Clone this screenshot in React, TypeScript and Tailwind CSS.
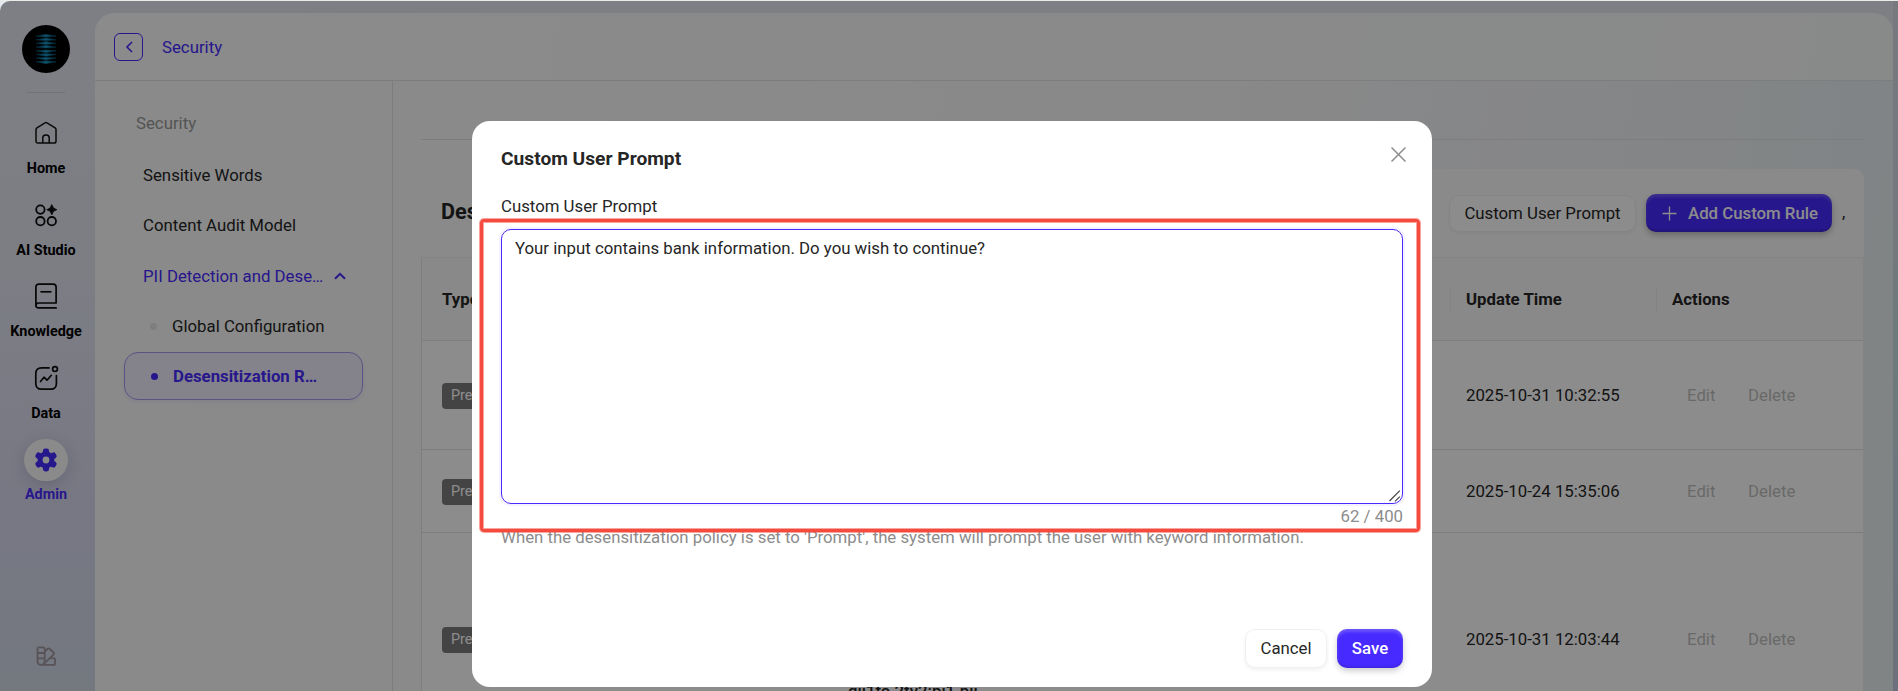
import React from "react";

const navItem = "flex flex-col items-center text-[14.4px] leading-[20px] font-bold text-black";

function HomeIcon() {
  return (
    <svg className="size-6" viewBox="0 0 24 24" fill="none" stroke="#111" strokeWidth="1.5" strokeLinejoin="round">
      <path d="M2 8.6 C2 7.8 2.3 7.4 2.9 6.9 L11 1.8 C11.6 1.4 12.4 1.4 13 1.8 L21.1 6.9 C21.7 7.4 22 7.8 22 8.6 V20.2 C22 21.3 21.3 22 20.2 22 H3.8 C2.7 22 2 21.3 2 20.2 Z" />
      <path d="M8.8 22 V16.8 C8.8 13.2 15.2 13.2 15.2 16.8 V22" />
    </svg>
  );
}

function StudioIcon() {
  return (
    <svg className="size-6" viewBox="0 0 24 24" fill="none" stroke="#0b0b0b" strokeWidth="1.8">
      <circle cx="6.4" cy="6.6" r="4.2" />
      <circle cx="6.4" cy="18.2" r="4.2" />
      <circle cx="17.8" cy="18.2" r="4.2" />
      <path d="M17.8 1.6 L19.5 5.1 L22.8 6.7 L19.5 8.3 L17.8 11.8 L16.1 8.3 L12.8 6.7 L16.1 5.1 Z" fill="#0b0b0b" strokeWidth="0.8" strokeLinejoin="round" />
    </svg>
  );
}

function BookIcon() {
  return (
    <svg className="h-[26px] w-6" viewBox="0 0 24 26" fill="none" stroke="#0b0b0b" strokeWidth="1.7" strokeLinejoin="round">
      <path d="M22.8 24.9 H4.6 C2.6 24.9 1.9 23.8 1.9 22.4 V4.3 C1.9 2.2 2.9 1.1 5 1.1 H19.2 C21.3 1.1 22.1 2.2 22.1 4.3 V20 H4.6 C2.8 20 1.9 21 1.9 22.4" />
      <path d="M6.4 8.8 H17.5" />
    </svg>
  );
}

function DataIcon() {
  return (
    <svg className="size-[26px]" viewBox="0 0 26 26" fill="none" stroke="#0b0b0b" strokeWidth="1.7" strokeLinecap="round" strokeLinejoin="round">
      <path d="M16 2.9 H8.6 C4.6 2.9 2.8 4.7 2.8 8.7 V18.4 C2.8 22.4 4.6 24.1 8.6 24.1 H17.8 C21.8 24.1 23.4 22.4 23.4 18.4 V10.5" />
      <path d="M7.5 16.5 L11 12.2 L14 15.2 L18.3 10.3" />
      <circle cx="22" cy="4" r="2.4" />
    </svg>
  );
}

function GearIcon() {
  const teeth = [0, 60, 120, 180, 240, 300];
  return (
    <svg className="size-6" viewBox="0 0 24 24" fill="#472aff">
      <path fillRule="evenodd" d="M12 3.6 A8.4 8.4 0 1 0 12 20.4 A8.4 8.4 0 1 0 12 3.6 Z M12 8.6 A3.4 3.4 0 1 1 12 15.4 A3.4 3.4 0 1 1 12 8.6 Z" />
      {teeth.map((a) => (
        <rect key={a} x="8.9" y="0.5" width="6.2" height="6" rx="2.4" transform={`rotate(${a} 12 12)`} />
      ))}
    </svg>
  );
}

function SwatchIcon() {
  return (
    <svg className="size-5" viewBox="0 0 20 20" fill="none" stroke="#a0979f" strokeWidth="1.8" strokeLinejoin="round">
      <path d="M1.5 3 C1.5 1.8 2 1.3 3.2 1.3 H7 C8.2 1.3 8.7 1.8 8.7 3 V15 C8.7 17.6 7.4 18.9 5.1 18.9 C2.8 18.9 1.5 17.6 1.5 15 Z" />
      <path d="M1.5 7 H8.7 M1.5 12.4 H8.7" />
      <path d="M8.7 5.6 L11.4 3 C12.2 2.2 13 2.2 13.8 3 L17.4 6.4 C18.2 7.2 18.2 7.8 17.4 8.6 L7.6 18.2" />
      <path d="M14 12.2 H17.4 C18.6 12.2 19.1 12.7 19.1 13.9 V17.2 C19.1 18.4 18.6 18.9 17.4 18.9 H5.1" />
    </svg>
  );
}

function Logo() {
  const bars = [0, 1, 2, 3, 4, 5, 6, 7];
  return (
    <svg className="size-12" viewBox="0 0 48 48">
      <defs>
        <linearGradient id="bar" x1="0" x2="1">
          <stop offset="0" stopColor="#0a4a6c" />
          <stop offset="0.5" stopColor="#1c9cc4" />
          <stop offset="1" stopColor="#0a4a6c" />
        </linearGradient>
      </defs>
      <circle cx="24" cy="24" r="24" fill="#000" />
      {bars.map((i) => {
        const y = 11.2 + i * 3.65;
        const up = i < 4 ? 1.9 : 0.9;
        const down = i < 4 ? 0.9 : 1.9;
        return <path key={i} d={`M14 ${y} L24 ${y - up} L34 ${y} L24 ${y + down} Z`} fill="url(#bar)" stroke="#0b5f85" strokeWidth="0.5" />;
      })}
    </svg>
  );
}

function Sidebar() {
  return (
    <nav className="flex w-[95px] shrink-0 flex-col items-center pr-[3px] pt-[25px]">
      <Logo />
      <div className="mt-[19px] h-px w-[38px] bg-[#cfd0da]" />
      <div className={`${navItem} mt-[28px]`}><HomeIcon /><span className="mt-[14px]">Home</span></div>
      <div className={`${navItem} mt-[24px]`}><StudioIcon /><span className="mt-[14px]">AI Studio</span></div>
      <div className={`${navItem} mt-[22px]`}><BookIcon /><span className="mt-[13px]">Knowledge</span></div>
      <div className={`${navItem} mt-[23px]`}><DataIcon /><span className="mt-[13px]">Data</span></div>
      <div className={`${navItem} mt-[15px]`}>
        <div className="flex h-[42px] w-11 items-center justify-center rounded-full bg-[#fbfbfb] shadow-[0_4px_16px_rgba(60,60,110,0.2)]"><GearIcon /></div>
        <span className="mt-[4px] text-[#472aff]">Admin</span>
      </div>
      <div className="mt-auto mb-[25px] pr-px"><SwatchIcon /></div>
    </nav>
  );
}

function Submenu() {
  return (
    <aside className="flex w-[298px] shrink-0 flex-col border-r border-[#e3e3e6] text-[16.8px] text-[#262626]">
      <div className="mt-[30px] pl-[41px] leading-[24px] text-[#9a9a9a]">Security</div>
      <div className="mt-[28px] pl-[48px] leading-[24px]">Sensitive Words</div>
      <div className="mt-[26px] pl-[48px] leading-[24px]">Content Audit Model</div>
      <div className="mt-[27px] flex items-center pl-[48px] leading-[24px] text-[#472aff]">
        PII Detection and Dese…
        <svg className="ml-[11px] h-2 w-3" viewBox="0 0 12 8" fill="none" stroke="#472aff" strokeWidth="2"><path d="M1 6.8 L6 1.8 L11 6.8" /></svg>
      </div>
      <div className="mt-[26px] flex items-center pl-[55px] leading-[24px]">
        <span className="mr-[15px] size-[7px] rounded-full bg-[#e6e6e9]" />Global Configuration
      </div>
      <div className="mt-[14px] ml-[29px] flex h-12 w-[239px] items-center rounded-[14px] border border-[#a698ef] bg-[#f1eefd] pl-[26px] font-bold leading-[24px] text-[#472aff] shadow-[0_2px_4px_rgba(70,40,255,0.08)]">
        <span className="mr-[15px] size-[7px] rounded-full bg-[#472aff]" />Desensitization R…
      </div>
    </aside>
  );
}

const rows = [
  { time: "2025-10-31 10:32:55", cls: "h-[109px] pt-[2px]", note: "" },
  { time: "2025-10-24 15:35:06", cls: "h-[83px] pt-[2px]", note: "" },
  { time: "2025-10-31 12:03:44", cls: "h-[214px]", note: "qjj1to 2tv2:pj1.pjj" },
];

function Content() {
  return (
    <section className="flex min-w-0 flex-1 flex-col pl-[28px] pr-[29px] text-[16.8px] text-[#262626]">
      <div className="h-[59px] shrink-0 border-b border-[#e3e3e6]" />
      <div className="mt-[29px] flex h-[89px] shrink-0 items-center rounded-t-[10px] border-b border-[#eeeeee] bg-[#fafcfa] pl-[20px] pr-[18px]">
        <h1 className="-mt-[2px] text-[21.6px] font-bold text-[#262626]">Desensitization Rules</h1>
        <button className="ml-auto h-[37px] w-[187px] rounded-[10px] border border-[#f0f0f0] bg-white pt-px shadow-[0_2px_4px_rgba(0,0,0,0.04)]">Custom User Prompt</button>
        <button className="ml-[10px] flex h-[38px] w-[186px] items-center rounded-[10px] bg-[#472aff] pl-[16px] pt-px font-medium text-white shadow-[inset_0_3px_3px_rgba(255,255,255,0.2),inset_0_-2px_2px_rgba(0,0,0,0.15),0_3px_6px_rgba(0,0,0,0.25)]">
          <svg className="mr-[11px] size-[15px] shrink-0" viewBox="0 0 15 15" stroke="#fff" strokeWidth="1.3"><path d="M7.5 0.5 V14.5 M0.5 7.5 H14.5" /></svg>
          <span className="whitespace-nowrap">Add Custom Rule</span>
        </button>
        <span className="ml-[10px] w-1">,</span>
      </div>
      <div className="mr-px flex h-[83px] shrink-0 items-center border-b border-l border-[#e6e6e6] bg-[#fafafa] pl-[20px] pt-px font-bold">
        <span className="w-[1008px]">Type</span>
        <div className="flex h-[26px] w-[206px] items-center border-l border-[#efefef] pl-[15px]">Update Time</div>
        <div className="flex h-[26px] items-center border-l border-[#efefef] pl-[15px]">Actions</div>
      </div>
      {rows.map((r) => (
        <div key={r.time} className={`${r.cls} relative mr-px flex shrink-0 items-center border-b border-l border-[#e3e3e3] bg-white pl-[20px]`}>
          <span className="flex h-[26px] w-[70px] items-center rounded-[4px] bg-[#7d7d7d] pl-[9px] text-[14.4px] text-white">Preset</span>
          <span className="ml-[954px] w-[221px]">{r.time}</span>
          <span className="w-[61px] text-[#bfbfbf]">Edit</span>
          <span className="text-[#bfbfbf]">Delete</span>
          {r.note && <span className="absolute left-[426px] top-[148px] font-medium leading-[20px]">{r.note}</span>}
        </div>
      ))}
    </section>
  );
}

function Modal() {
  return (
    <div className="relative flex h-[566px] w-[960px] flex-col rounded-[18px] bg-white pl-[29px] pr-[29px] text-[16.8px] text-[#262626]">
      <svg className="absolute right-[26px] top-[26px] size-[15px]" viewBox="0 0 15 15" stroke="#8c8c8c" strokeWidth="1.5"><path d="M0.5 0.5 L14.5 14.5 M14.5 0.5 L0.5 14.5" /></svg>
      <h2 className="mt-[25px] text-[19.2px] font-bold leading-[26px]">Custom User Prompt</h2>
      <label className="mt-[22px] leading-[24px]">Custom User Prompt</label>
      <div className="relative mt-[11px] h-[275px] w-[902px] shrink-0">
        <textarea
          readOnly
          defaultValue="Your input contains bank information. Do you wish to continue?"
          className="block size-full resize-none rounded-[10px] border border-[#472aff] px-[13px] py-[6px] leading-[24px] shadow-[0_0_0_2px_rgba(71,42,255,0.06)] outline-none"
        />
        <svg className="absolute bottom-[2px] right-[2px] size-3" viewBox="0 0 12 12" fill="none" stroke="#444" strokeWidth="1.2"><path d="M0.5 11 L10.8 0.7 M6 11.4 L10.8 6.6" /></svg>
      </div>
      <div className="text-right leading-[24px] text-[#8c8c8c]">62 / 400</div>
      <p className="-mt-[3px] leading-[24px] text-[#8c8c8c]">When the desensitization policy is set to 'Prompt', the system will prompt the user with keyword information.</p>
      <div className="mt-auto mb-[19px] flex justify-end gap-[10px]">
        <button className="h-[39px] w-[82px] rounded-[10px] border border-[#f0f0f0] bg-white shadow-[0_2px_4px_rgba(0,0,0,0.06)]">Cancel</button>
        <button className="h-[39px] w-[66px] rounded-[10px] bg-[#472aff] font-medium text-white shadow-[inset_0_3px_3px_rgba(255,255,255,0.2),inset_0_-2px_2px_rgba(0,0,0,0.1),0_3px_6px_rgba(0,0,0,0.2)]">Save</button>
      </div>
      <div className="pointer-events-none absolute left-[8px] top-[98px] h-[313px] w-[940px] rounded-[4px] border-[3px] border-[#f44b3e] shadow-[0_0_0_1px_rgba(244,75,62,0.5),inset_0_0_0_1px_rgba(244,75,62,0.5)]" />
    </div>
  );
}

export default function App() {
  return (
    <div className="relative h-[691px] w-[1898px] overflow-hidden bg-[#e8ece9] font-[Roboto,sans-serif] text-[#262626]">
      <div className="flex h-full overflow-hidden bg-[linear-gradient(180deg,#e6e8f0_0%,#e3e5f0_40%,#dadaf0_75%,#d3dae8_100%)]">
        <Sidebar />
        <main className="mt-[13px] flex min-w-0 flex-1 flex-col overflow-hidden rounded-t-[20px] bg-[linear-gradient(100deg,#fbfcfb_0%,#fafafa_55%,#f4f5f8_75%,#edf2f5_88%,#e9f0f2_100%)]">
          <header className="flex h-[68px] shrink-0 items-center border-b border-[#e3e3e6] bg-[#fbfcfb]/80 pl-[19px]">
            <div className="flex h-7 w-[29px] items-center justify-center rounded-[6px] border border-[#472aff]">
              <svg className="h-3 w-2" viewBox="0 0 8 12" fill="none" stroke="#472aff" strokeWidth="1.6"><path d="M7 1 L2 6 L7 11" /></svg>
            </div>
            <span className="ml-[19px] pt-[2px] text-[16.8px] text-[#472aff]">Security</span>
          </header>
          <div className="flex min-h-0 flex-1">
            <Submenu />
            <Content />
          </div>
        </main>
        <div className="w-[5px] shrink-0 bg-[linear-gradient(180deg,#dadce8_0%,#d6dbe8_30%,#c9dfe3_50%,#c5cde2_100%)]" />
      </div>
      <div className="absolute inset-x-0 top-0 h-px bg-[#e8ece9]" />
      <div className="absolute inset-x-0 bottom-0 top-px flex items-start justify-center rounded-tl-[10px] bg-black/45 pl-[6px] pt-[120px]">
        <Modal />
      </div>
    </div>
  );
}
